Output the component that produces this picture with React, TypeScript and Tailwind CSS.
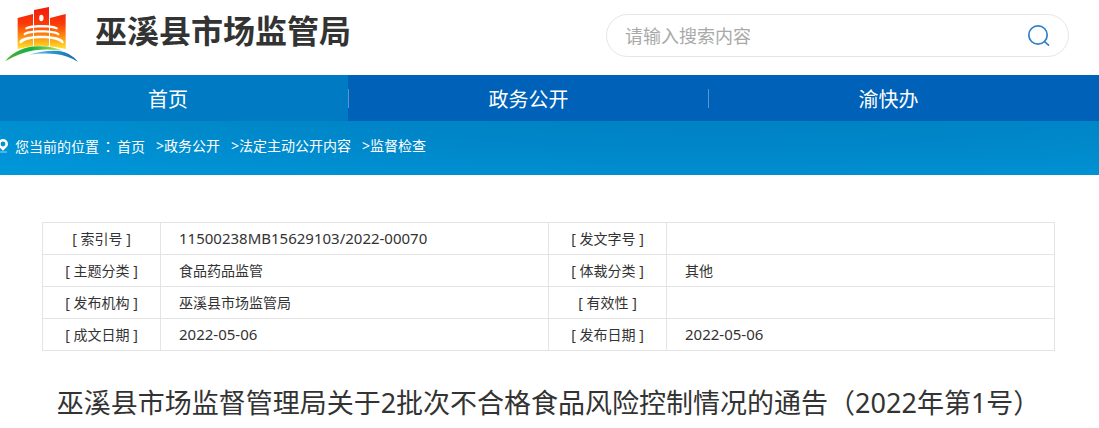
import React from "react";

const navItems = ["首页", "政务公开", "渝快办"];
const crumbs = ["政务公开", "法定主动公开内容", "监督检查"];

type Field = { label: string; value: string };

const rows: [Field, Field][] = [
  [
    { label: "索引号", value: "11500238MB15629103/2022-00070" },
    { label: "发文字号", value: "" },
  ],
  [
    { label: "主题分类", value: "食品药品监管" },
    { label: "体裁分类", value: "其他" },
  ],
  [
    { label: "发布机构", value: "巫溪县市场监管局" },
    { label: "有效性", value: "" },
  ],
  [
    { label: "成文日期", value: "2022-05-06" },
    { label: "发布日期", value: "2022-05-06" },
  ],
];

// Punctuation centred in its full-width cell
function Mark({ children }: { children: string }) {
  return (
    <span lang="zh-TW" className="font-['Noto_Sans_CJK_TC',sans-serif]">
      {children}
    </span>
  );
}

function Logo() {
  return (
    <svg viewBox="15 18 222 171" className="h-[57px] w-[74px] shrink-0" aria-hidden="true">
      <defs>
        <linearGradient id="tower" x1="0" y1="22" x2="0" y2="145" gradientUnits="userSpaceOnUse">
          <stop offset="0" stopColor="#f01c0c" />
          <stop offset="0.4" stopColor="#fb3a08" />
          <stop offset="0.7" stopColor="#fd8a10" />
          <stop offset="1" stopColor="#ffe02a" />
        </linearGradient>
        <linearGradient id="hill" x1="15" y1="0" x2="190" y2="0" gradientUnits="userSpaceOnUse">
          <stop offset="0" stopColor="#4fae2c" />
          <stop offset="0.45" stopColor="#16b046" />
          <stop offset="0.8" stopColor="#8ed04c" />
          <stop offset="1" stopColor="#d6ea9a" />
        </linearGradient>
        <linearGradient id="river" x1="90" y1="0" x2="235" y2="0" gradientUnits="userSpaceOnUse">
          <stop offset="0" stopColor="#7cc8ea" />
          <stop offset="0.5" stopColor="#2a92d0" />
          <stop offset="1" stopColor="#1768ae" />
        </linearGradient>
      </defs>
      <g fill="url(#tower)">
        <path d="M53 54 L99 42 V143 L53 147 Z" />
        <path d="M102 30 L147 21 V143 H102 Z" />
        <path d="M150 54 L197 42 V147 L150 143 Z" />
      </g>
      <ellipse cx="124" cy="54" rx="6.5" ry="9.5" fill="#fff" />
      <g fill="#fff">
        <path d="M76 84 C80 72 168 72 173 84 C175 90 168 88 164 86 C150 81 100 81 86 86 C80 88 74 90 76 84 Z" />
        <path d="M71 101 C76 87 172 87 178 101 C179 107 173 106 169 103 C152 96 98 96 81 103 C76 106 70 107 71 101 Z" />
        <path d="M58 126 C60 101 188 101 191 126 C191 132 186 131 182 127 C164 111 86 111 68 127 C63 131 58 132 58 126 Z" />
      </g>
      <path d="M50 148 Q124 127 200 148 V154 H50 Z" fill="#fff" />
      <path d="M15 184 Q52 140 116 139 Q158 138 190 153 Q150 145 104 151 Q60 158 15 184 Z" fill="url(#hill)" />
      <path d="M88 164 Q132 150 178 153 Q212 157 234 186 Q204 166 166 162 Q128 158 88 164 Z" fill="url(#river)" />
    </svg>
  );
}

function PinIcon() {
  return (
    <svg viewBox="0 0 12 14" className="-ml-[3px] h-[14px] w-3 shrink-0" aria-hidden="true">
      <path fillRule="evenodd" fill="#fff" d="M6 0 A5 5 0 0 1 11 5 C11 8 8 9.2 6 12 C4 9.2 1 8 1 5 A5 5 0 0 1 6 0 Z M6 2.6 A2.4 2.4 0 1 0 6 7.4 A2.4 2.4 0 1 0 6 2.6 Z" />
      <path d="M3 13 H10" stroke="#fff" strokeOpacity="0.6" />
    </svg>
  );
}

function FieldCells({ field }: { field: Field }) {
  const numeric = /^[\x20-\x7e]+$/.test(field.value);
  return (
    <>
      <th scope="row" className="h-8 border border-[#e4e4e4] text-center font-normal">
        [ {field.label} ]
      </th>
      <td className={`h-8 border border-[#e4e4e4] pl-[18px] ${numeric ? "text-[15px]" : ""}`}>{field.value}</td>
    </>
  );
}

export default function App() {
  return (
    <div className="min-h-screen overflow-hidden bg-white font-['Noto_Sans','Noto_Sans_CJK_SC',sans-serif] text-sm text-[#333]">
      <header className="flex h-[75px] items-start pr-[30px] pl-[5px]">
        <div className="flex grow items-start gap-4 pt-[6px]">
          <Logo />
          <h1 className="text-[32px] leading-[50px] font-bold">巫溪县市场监管局</h1>
        </div>
        <form
          className="mt-[14px] flex h-[43px] w-[463px] items-center rounded-full border border-[#e6e6e6] pr-[17px] pl-[18px]"
          onSubmit={(e) => e.preventDefault()}
        >
          <input
            type="text"
            aria-label="请输入搜索内容"
            placeholder="请输入搜索内容"
            className="min-w-0 grow bg-transparent text-lg outline-none placeholder:text-[#a9a9a9]"
          />
          <button type="submit" aria-label="搜索">
            <svg viewBox="0 0 24 24" className="size-6" fill="none" stroke="#2f80c8" strokeWidth="1.7" strokeLinecap="round">
              <circle cx="11" cy="11" r="9.2" />
              <path d="M17.5 17.5 L21.5 21.2" />
            </svg>
          </button>
        </form>
      </header>

      <nav className="bg-[#0061b8] pr-[31px]">
        <ul className="-ml-3 grid grid-cols-3">
          {navItems.map((item, i) => (
            <li key={item} className={`flex h-[46px] items-center ${i === 0 ? "bg-[#007ac3]" : ""}`}>
              {i > 0 && <span className="h-[19px] w-px bg-[#5c94d0]" />}
              <a href="#" className="grow pt-1 text-center text-xl text-white">
                {item}
              </a>
            </li>
          ))}
        </ul>
      </nav>

      <div className="flex h-[54px] items-center bg-[radial-gradient(ellipse_at_65%_-20%,#0080c2_0%,#0088ca_50%,#0098da_100%)] pb-1 text-white">
        <PinIcon />
        <p className="ml-[6px] flex gap-[11px] whitespace-nowrap">
          <span>
            您当前的位置
            <span className="mx-0.5">
              <Mark>：</Mark>
            </span>
            <a href="#">首页</a>
          </span>
          {crumbs.map((crumb) => (
            <span key={crumb}>
              &gt;<a href="#">{crumb}</a>
            </span>
          ))}
        </p>
      </div>

      <main className="pt-[47px] pr-11 pl-[42px]">
        <table className="w-full table-fixed border-collapse">
          <colgroup>
            <col className="w-[118px]" />
            <col />
            <col className="w-[118px]" />
            <col />
          </colgroup>
          <tbody>
            {rows.map(([left, right]) => (
              <tr key={left.label}>
                <FieldCells field={left} />
                <FieldCells field={right} />
              </tr>
            ))}
          </tbody>
        </table>
        <h2 className="mt-[31px] text-center text-[27px] leading-10 whitespace-nowrap">
          巫溪县市场监督管理局关于2批次不合格食品风险控制情况的通告<Mark>（</Mark>2022年第1号<Mark>）</Mark>
        </h2>
      </main>
    </div>
  );
}
